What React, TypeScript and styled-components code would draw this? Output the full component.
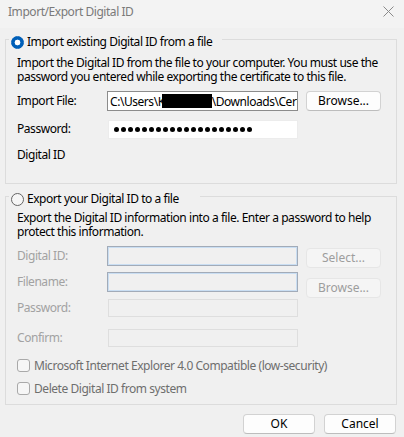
import React from "react";
import styled, { createGlobalStyle } from "styled-components";

const GlobalStyle = createGlobalStyle`
  html, body {
    margin: 0;
    padding: 0;
    background: #f0f0f0;
  }
  body {
    font-family: "Noto Sans", "Segoe UI", sans-serif;
    font-size: 12px;
    letter-spacing: -0.45px;
    color: #000;
  }
  * {
    box-sizing: border-box;
  }
`;

const Window = styled.div`
  width: 404px;
  height: 437px;
  background: #f0f0f0;
  display: flex;
  flex-direction: column;
  overflow: hidden;
`;

const TitleBar = styled.div`
  flex: 0 0 28px;
  display: flex;
  align-items: center;
  justify-content: space-between;
  padding: 0 10px 6px 8px;
  background: #f3f3f3;
  color: #7a7a7a;
`;

const Group = styled.fieldset<{ $top: number; $inset: number; $bottom: number }>`
  margin: ${(p) => p.$top}px 7px 0 5px;
  padding: ${(p) => p.$inset}px 11px ${(p) => p.$bottom}px 11px;
  border: 1px solid #dcdcdc;
  min-width: 0;
`;

const Legend = styled.legend<{ $width: number }>`
  margin-left: -8px;
  padding: 6px 0 0 2px;
  width: ${(p) => p.$width}px;
  height: 22px;
`;

const LegendLine = styled.div`
  height: 16px;
  display: flex;
  align-items: center;
  gap: 3px;
  line-height: 16px;
  white-space: nowrap;
`;

const Radio = styled.span<{ $checked?: boolean }>`
  flex: none;
  width: 13px;
  height: 13px;
  border-radius: 50%;
  background: ${(p) =>
    p.$checked
      ? "radial-gradient(circle, #fff 0 2.6px, #005fb8 3.2px)"
      : "#f6f6f6"};
  border: 1px solid ${(p) => (p.$checked ? "#005fb8" : "#646464")};
`;

const Description = styled.p`
  margin: 0;
  line-height: 14px;
  white-space: nowrap;
`;

const FieldRow = styled.div<{ $gap: number }>`
  display: grid;
  grid-template-columns: 82px 191px 75px;
  grid-template-rows: 20px;
  column-gap: 8px;
  align-items: center;
  height: 20px;
  margin-top: ${(p) => p.$gap}px;
`;

const Label = styled.span<{ $disabled?: boolean }>`
  color: ${(p) => (p.$disabled ? "#a2a2a2" : "#000")};
  line-height: 18px;
  white-space: nowrap;
`;

type FieldKind = "file" | "secret" | "focus" | "off";

const Field = styled.div<{ $kind: FieldKind }>`
  height: ${(p) => (p.$kind === "secret" ? 19 : p.$kind === "off" ? 18 : 20)}px;
  display: flex;
  align-items: center;
  overflow: hidden;
  white-space: nowrap;
  padding-left: ${(p) => (p.$kind === "secret" ? 5 : 2)}px;
  background: ${(p) => (p.$kind === "file" || p.$kind === "secret" ? "#fff" : "#f0f0f0")};
  border: 1px solid
    ${(p) =>
      p.$kind === "file"
        ? "#8c8c8c"
        : p.$kind === "secret"
        ? "#ececec"
        : p.$kind === "focus"
        ? "#a2abb8"
        : "#dedede"};
  box-shadow: ${(p) => (p.$kind === "focus" ? "inset 0 0 0 1px #c9def3" : "none")};
  margin-left: ${(p) => (p.$kind === "secret" || p.$kind === "off" ? 1 : 0)}px;
`;

const Redacted = styled.span`
  flex: none;
  display: inline-block;
  width: 50px;
  height: 14px;
  margin-left: -3px;
  background: #000;
`;

const Dots = styled.div`
  display: flex;
  gap: 2px;
`;

const Dot = styled.span`
  width: 5px;
  height: 5px;
  border-radius: 50%;
  background: #000;
`;

const Button = styled.button<{ $disabled?: boolean; $offset?: number; $width?: number }>`
  width: ${(p) => (p.$width ? `${p.$width}px` : "100%")};
  height: 20px;
  padding: 0;
  align-self: start;
  margin-top: ${(p) => p.$offset ?? 0}px;
  border-radius: 4px;
  font: inherit;
  line-height: 18px;
  background: ${(p) => (p.$disabled ? "#f5f5f5" : "#fdfdfd")};
  color: ${(p) => (p.$disabled ? "#9d9d9d" : "#000")};
  border: 1px solid ${(p) => (p.$disabled ? "#e6e6e6" : "#d2d2d2")};
  border-bottom-color: ${(p) => (p.$disabled ? "#e6e6e6" : "#bdbdbd")};
`;

const CheckRow = styled.label<{ $gap: number }>`
  display: flex;
  align-items: center;
  gap: 4px;
  height: 18px;
  margin-top: ${(p) => p.$gap}px;
  color: #6e6e6e;
  white-space: nowrap;
`;

const Box = styled.span`
  flex: none;
  width: 13px;
  height: 13px;
  border: 1px solid #a9a9a9;
  border-radius: 3px;
  background: #f6f6f6;
`;

const Footer = styled.div`
  display: flex;
  justify-content: flex-end;
  gap: 9px;
  margin-top: 9px;
  padding-right: 8px;
`;

const CloseIcon = () => (
  <svg width="11" height="11" viewBox="0 0 11 11">
    <path d="M0.5 0.5 L10.5 10.5 M10.5 0.5 L0.5 10.5" stroke="#8a8a8a" strokeWidth="1" />
  </svg>
);

export default function App() {
  return (
    <Window>
      <GlobalStyle />
      <TitleBar>
        <span>Import/Export Digital ID</span>
        <CloseIcon />
      </TitleBar>

      <Group $top={0} $inset={6} $bottom={18}>
        <Legend $width={213}>
          <LegendLine>
            <Radio $checked />
            Import existing Digital ID from a file
          </LegendLine>
        </Legend>
        <Description>
          Import the Digital ID from the file to your computer. You must use the
          <br />
          password you entered while exporting the certificate to this file.
        </Description>
        <FieldRow $gap={7}>
          <Label>Import File:</Label>
          <Field $kind="file">
            C:\Users\K<Redacted />\Downloads\Certificate.pfx
          </Field>
          <Button>Browse...</Button>
        </FieldRow>
        <FieldRow $gap={8}>
          <Label>Password:</Label>
          <Field $kind="secret">
            <Dots>
              {Array.from({ length: 20 }).map((_, i) => (
                <Dot key={i} />
              ))}
            </Dots>
          </Field>
        </FieldRow>
        <FieldRow $gap={6}>
          <Label>Digital ID</Label>
        </FieldRow>
      </Group>

      <Group $top={1} $inset={4} $bottom={7}>
        <Legend $width={191}>
          <LegendLine>
            <Radio />
            Export your Digital ID to a file
          </LegendLine>
        </Legend>
        <Description>
          Export the Digital ID information into a file. Enter a password to help
          <br />
          protect this information.
        </Description>
        <FieldRow $gap={7}>
          <Label $disabled>Digital ID:</Label>
          <Field $kind="focus" />
          <Button $disabled $offset={2}>
            Select...
          </Button>
        </FieldRow>
        <FieldRow $gap={6}>
          <Label $disabled>Filename:</Label>
          <Field $kind="focus" />
          <Button $disabled $offset={6}>
            Browse...
          </Button>
        </FieldRow>
        <FieldRow $gap={6}>
          <Label $disabled>Password:</Label>
          <Field $kind="off" />
        </FieldRow>
        <FieldRow $gap={10}>
          <Label $disabled>Confirm:</Label>
          <Field $kind="off" />
        </FieldRow>
        <CheckRow $gap={8}>
          <Box />
          Microsoft Internet Explorer 4.0 Compatible (low-security)
        </CheckRow>
        <CheckRow $gap={5}>
          <Box />
          Delete Digital ID from system
        </CheckRow>
      </Group>

      <Footer>
        <Button $width={72}>OK</Button>
        <Button $width={72}>Cancel</Button>
      </Footer>
    </Window>
  );
}
